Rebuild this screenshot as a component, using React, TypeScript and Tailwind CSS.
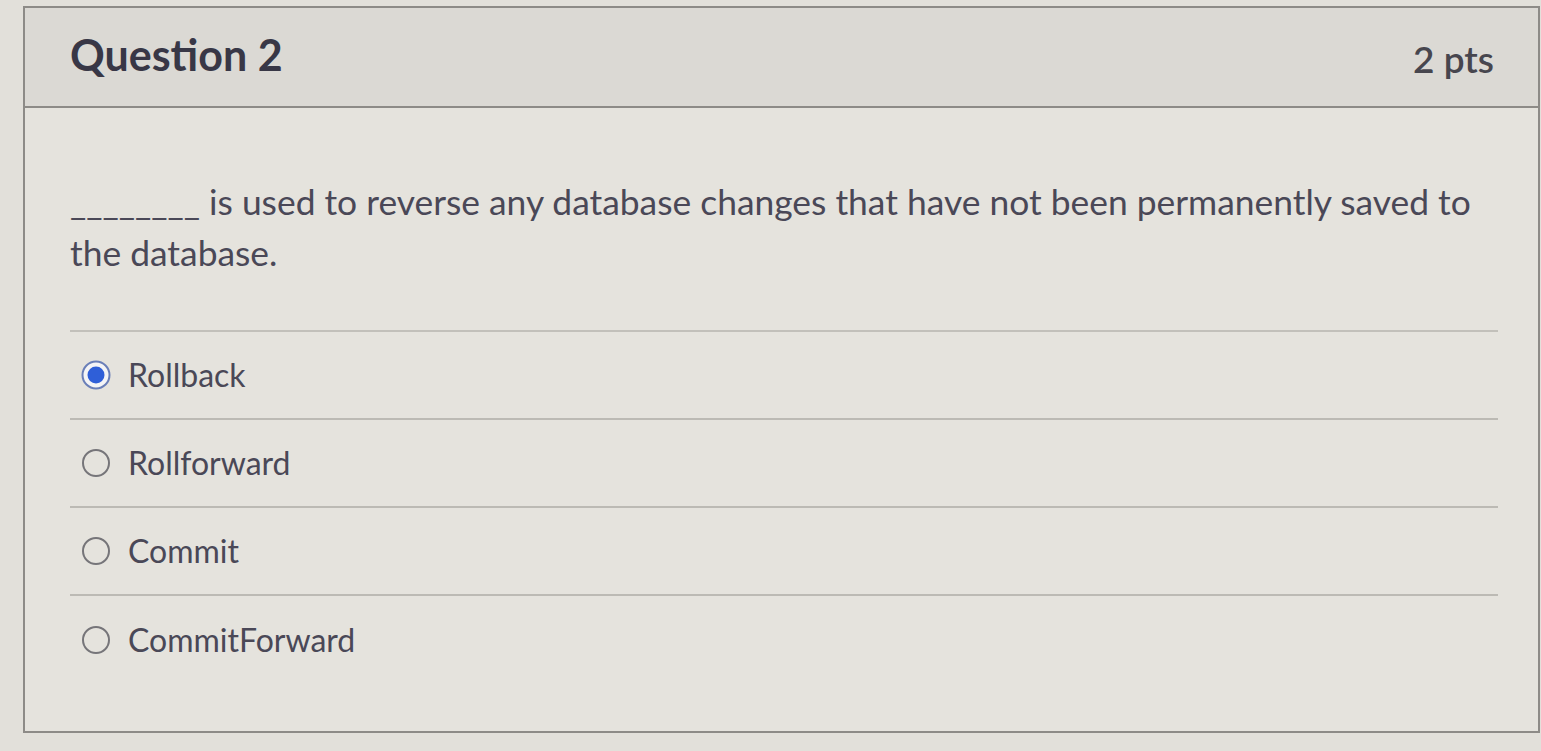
const options = [
  { label: 'Rollback', checked: true },
  { label: 'Rollforward', checked: false },
  { label: 'Commit', checked: false },
  { label: 'CommitForward', checked: false },
];

function Radio({ checked }: { checked: boolean }) {
  if (checked) {
    return (
      <svg width="30" height="30" viewBox="0 0 30 30" className="shrink-0">
        <circle cx="15" cy="15" r="13.5" fill="#f4f4f6" stroke="#6a7fb8" strokeWidth="2" />
        <circle cx="15" cy="15" r="8.5" fill="#2f5fd8" />
      </svg>
    );
  }
  return (
    <svg width="30" height="30" viewBox="0 0 30 30" className="shrink-0">
      <circle cx="15" cy="15" r="13" fill="none" stroke="#767579" strokeWidth="2" />
    </svg>
  );
}

export default function App() {
  return (
    <div
      className="w-full h-[751px] bg-[#e2e0da] pl-[23px] pt-[6px] overflow-hidden"
      style={{ fontFamily: "Lato, 'Open Sans', sans-serif" }}
    >
      <div className="w-[1517px] h-[727px] border-2 border-[#8d8b87] flex flex-col">
        <div className="h-[100px] bg-[#dbd9d4] border-b-2 border-[#8d8b87] flex items-center justify-between pl-[45px] pr-[44px]">
          <h2 className="text-[43px] font-bold text-[#383746] leading-none -mt-[6px]">Question 2</h2>
          <span className="text-[37px] font-semibold text-[#47464e] leading-none mt-[2px]">2 pts</span>
        </div>

        <div className="flex-1 bg-[#e5e3dd] pl-[45px] pr-[40px] pt-[68px]">
          <p className="text-[35.4px] leading-[51px] text-[#4a4857] pr-[20px]">
            ________ is used to reverse any database changes that have not been permanently saved to the
            database.
          </p>

          <div className="mt-[52px] border-t-2 border-[#c2c0ba]">
            {options.map((o, i) => (
              <div
                key={o.label}
                className={
                  'h-[88px] flex items-center gap-[17px] pl-[11px] ' +
                  (i < options.length - 1 ? 'border-b-2 border-[#bcbab4]' : '')
                }
              >
                <Radio checked={o.checked} />
                <span className="text-[32px] text-[#4a4857] leading-none">{o.label}</span>
              </div>
            ))}
          </div>
        </div>
      </div>
    </div>
  );
}
